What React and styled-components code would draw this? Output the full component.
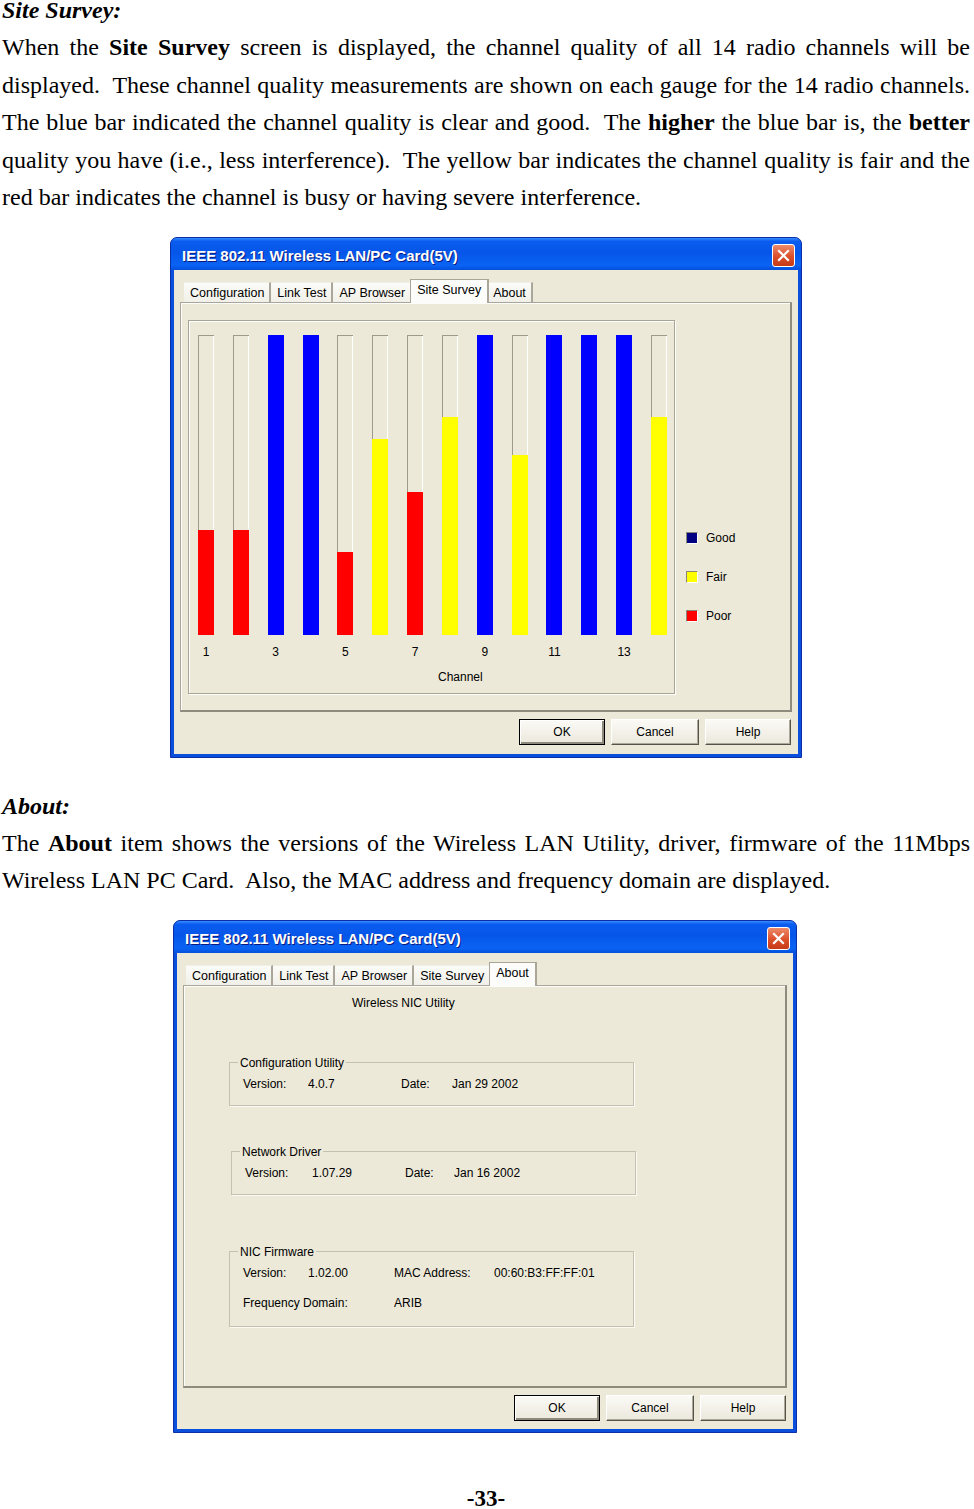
import React from "react";
import styled, { createGlobalStyle } from "styled-components";

const GlobalStyle = createGlobalStyle`
  html, body {
    margin: 0;
    padding: 0;
    background: #fff;
  }
  body {
    font-family: "Liberation Serif", "Times New Roman", serif;
    color: #000;
  }
`;

const BARS = [
  { q: "poor", h: 105 },
  { q: "poor", h: 105 },
  { q: "good", h: 300 },
  { q: "good", h: 300 },
  { q: "poor", h: 83 },
  { q: "fair", h: 196 },
  { q: "poor", h: 143 },
  { q: "fair", h: 218 },
  { q: "good", h: 300 },
  { q: "fair", h: 180 },
  { q: "good", h: 300 },
  { q: "good", h: 300 },
  { q: "good", h: 300 },
  { q: "fair", h: 218 },
];

const FILL = { good: "#0000ff", fair: "#ffff00", poor: "#ff0000" };
const SWATCH = { good: "#000080", fair: "#ffff00", poor: "#ff0000" };

const TABS = ["Configuration", "Link Test", "AP Browser", "Site Survey", "About"];

/* ---------- document ---------- */

const Page = styled.div`
  width: 974px;
  box-sizing: border-box;
  padding: 0 4px 0 2px;
`;

const Heading = styled.div`
  margin-top: ${(p) => p.$top || 0}px;
  font-size: 24px;
  font-style: italic;
  font-weight: bold;
  line-height: 20px;
  height: 20px;
`;

const Para = styled.div`
  margin-top: 9px;
  font-size: 24px;
  line-height: 37.5px;
`;

const Line = styled.div`
  text-align: ${(p) => (p.$last ? "left" : "justify")};
  text-align-last: ${(p) => (p.$last ? "left" : "justify")};
`;

const PageNo = styled.div`
  margin-top: 55px;
  text-align: center;
  font-size: 23px;
  font-weight: bold;
  line-height: 22px;
  height: 22px;
`;

/* ---------- xp window ---------- */

const Window = styled.div`
  width: ${(p) => p.$w}px;
  box-sizing: border-box;
  margin: 20px 0 0 ${(p) => p.$left}px;
  background: #0a4fdc;
  border: 1px solid #0b2fa6;
  border-radius: 7px 7px 0 0;
  padding: 0 3px 3px;
  font-family: "Liberation Sans", Arial, sans-serif;
  font-size: 12px;
`;

const TitleBar = styled.div`
  height: 32px;
  margin: 0 -3px;
  border-radius: 6px 6px 0 0;
  background: linear-gradient(
    180deg,
    #3a8cff 0%,
    #0a5cf0 10%,
    #0556e8 45%,
    #0a63f4 85%,
    #0450dc 100%
  );
  display: flex;
  align-items: center;
  justify-content: space-between;
  padding: 3px 6px 0 11px;
  box-sizing: border-box;
`;

const Title = styled.span`
  color: #fff;
  font-weight: bold;
  font-size: 15px;
  text-shadow: 1px 1px 0 #0a1a80;
  white-space: nowrap;
`;

const CloseBtn = styled.div`
  width: 21px;
  height: 21px;
  border: 1px solid #fff;
  border-radius: 3px;
  background: linear-gradient(180deg, #ec8b6c 0%, #dc4f2b 55%, #c73a17 100%);
  display: flex;
  align-items: center;
  justify-content: center;
`;

const Body = styled.div`
  background: #ece9d8;
  padding: 8px 6px ${(p) => p.$bottom}px;
`;

const TabRow = styled.div`
  display: flex;
  align-items: flex-end;
  height: 24px;
  padding-left: ${(p) => p.$indent}px;
  font-size: 12.5px;
`;

const Tab = styled.div`
  position: relative;
  box-sizing: border-box;
  height: ${(p) => (p.$active ? 24 : 21)}px;
  line-height: ${(p) => (p.$active ? 20 : 21)}px;
  padding: 0 ${(p) => (p.$active ? 6 : 5)}px;
  margin: 0 ${(p) => (p.$active ? -2 : 0)}px -1px;
  background: ${(p) =>
    p.$active ? "#fcfcfa" : "linear-gradient(180deg, #fbfbf8, #f0efe8)"};
  border: 1px solid ${(p) => (p.$active ? "#a9a699" : "transparent")};
  border-bottom: none;
  border-right: 2px solid #aaa79a;
  z-index: ${(p) => (p.$active ? 2 : 0)};
  white-space: nowrap;
`;

const Panel = styled.div`
  position: relative;
  z-index: 1;
  height: ${(p) => p.$h}px;
  box-sizing: border-box;
  border: 1px solid #a9a699;
  border-right: 2px solid #8e8b7e;
  border-bottom: 2px solid #8e8b7e;
  box-shadow: inset 1px 1px 0 #fdfdfb;
  background: #ece9d8;
`;

const Buttons = styled.div`
  margin-top: 7px;
  display: flex;
  justify-content: flex-end;
  gap: 6px;
  padding-right: 1px;
`;

const Button = styled.div`
  width: ${(p) => p.$w}px;
  height: ${(p) => p.$h}px;
  box-sizing: border-box;
  display: flex;
  align-items: center;
  justify-content: center;
  background: linear-gradient(180deg, #fbfaf6, #ebe8dc);
  border: 1px solid;
  border-color: ${(p) =>
    p.$default ? "#000 #000 #000 #000" : "#fff #55534a #55534a #fff"};
  box-shadow: ${(p) =>
    p.$default
      ? "inset 1px 1px 0 #fff, inset -2px -2px 0 #8d8a7c"
      : "inset -1px -1px 0 #aca899"};
`;

/* ---------- site survey chart ---------- */

const SurveyLayout = styled.div`
  display: flex;
  align-items: flex-start;
  padding: 17px 0 0 7px;
`;

const ChartBox = styled.div`
  width: 487px;
  height: 374px;
  box-sizing: border-box;
  border: 1px solid #a9a594;
  box-shadow: 1px 1px 0 #fff, inset 1px 1px 0 #fff;
  padding: 14px 0 0 9px;
`;

const BarRow = styled.div`
  display: flex;
  gap: 18.85px;
`;

const Track = styled.div`
  width: 16px;
  height: 300px;
  display: flex;
  flex-direction: column;
  justify-content: flex-end;
  background: #ece9d8;
  box-shadow: inset 1px 1px 0 #9d9a8a, inset -1px 0 0 #fff;
`;

const Fill = styled.div`
  width: 100%;
  background: ${(p) => FILL[p.$q]};
`;

const LabelCell = styled.div`
  width: 16px;
  text-align: center;
  white-space: nowrap;
  line-height: 16px;
`;

const LabelRow = styled(BarRow)`
  margin-top: 9px;
`;

const AxisName = styled.div`
  margin-top: 9px;
  padding-left: 240px;
  line-height: 16px;
`;

const Legend = styled.div`
  margin-left: 11px;
  padding-top: 212px;
  display: flex;
  flex-direction: column;
  gap: 27px;
`;

const LegendItem = styled.div`
  display: flex;
  align-items: center;
  gap: 8px;
  height: 12px;
`;

const Swatch = styled.span`
  width: 12px;
  height: 12px;
  box-sizing: border-box;
  background: ${(p) => SWATCH[p.$q]};
  border: 1px solid;
  border-color: #8a8778 #fff #fff #8a8778;
`;

/* ---------- about ---------- */

const Caption = styled.div`
  margin-top: 10px;
  padding-left: 168px;
  line-height: 14px;
`;

const Group = styled.fieldset`
  width: 405px;
  box-sizing: border-box;
  margin: ${(p) => p.$top}px 0 0 ${(p) => p.$left}px;
  padding: 7px 13px ${(p) => p.$pb}px;
  border: 1px solid #c4c1b1;
  box-shadow: 1px 1px 0 #fbfaf5;

  legend {
    padding: 0 2px;
    margin-left: -5px;
    line-height: 14px;
  }
`;

const Grid = styled.div`
  display: grid;
  grid-template-columns: ${(p) => p.$cols};
  row-gap: 16px;
  line-height: 14px;
  white-space: nowrap;
`;

const Span2 = styled.span`
  grid-column: span 2;
`;

const CloseIcon = () => (
  <svg width="13" height="13" viewBox="0 0 13 13">
    <path d="M2 2 L11 11 M11 2 L2 11" stroke="#fff" strokeWidth="2.2" strokeLinecap="square" />
  </svg>
);

const Dialog = ({ w, left, active, panelH, indent, bottom, btnH, children }) => (
  <Window $w={w} $left={left}>
    <TitleBar>
      <Title>IEEE 802.11 Wireless LAN/PC Card(5V)</Title>
      <CloseBtn>
        <CloseIcon />
      </CloseBtn>
    </TitleBar>
    <Body $bottom={bottom}>
      <TabRow $indent={indent}>
        {TABS.map((t) => (
          <Tab key={t} $active={t === active}>
            {t}
          </Tab>
        ))}
      </TabRow>
      <Panel $h={panelH}>{children}</Panel>
      <Buttons>
        <Button $w={86} $h={btnH} $default>
          OK
        </Button>
        <Button $w={88} $h={btnH}>
          Cancel
        </Button>
        <Button $w={86} $h={btnH}>
          Help
        </Button>
      </Buttons>
    </Body>
  </Window>
);

const SiteSurvey = () => (
  <SurveyLayout>
    <ChartBox>
      <BarRow>
        {BARS.map((b, i) => (
          <Track key={i}>
            <Fill $q={b.q} style={{ height: b.h }} />
          </Track>
        ))}
      </BarRow>
      <LabelRow>
        {BARS.map((b, i) => (
          <LabelCell key={i}>{i % 2 === 0 ? i + 1 : ""}</LabelCell>
        ))}
      </LabelRow>
      <AxisName>Channel</AxisName>
    </ChartBox>
    <Legend>
      <LegendItem>
        <Swatch $q="good" />
        Good
      </LegendItem>
      <LegendItem>
        <Swatch $q="fair" />
        Fair
      </LegendItem>
      <LegendItem>
        <Swatch $q="poor" />
        Poor
      </LegendItem>
    </Legend>
  </SurveyLayout>
);

const About = () => (
  <>
    <Caption>Wireless NIC Utility</Caption>
    <Group $top={46} $left={45} $pb={14}>
      <legend>Configuration Utility</legend>
      <Grid $cols="65px 93px 51px auto">
        <span>Version:</span>
        <span>4.0.7</span>
        <span>Date:</span>
        <span>Jan 29 2002</span>
      </Grid>
    </Group>
    <Group $top={39} $left={47} $pb={14}>
      <legend>Network Driver</legend>
      <Grid $cols="67px 93px 49px auto">
        <span>Version:</span>
        <span>1.07.29</span>
        <span>Date:</span>
        <span>Jan 16 2002</span>
      </Grid>
    </Group>
    <Group $top={50} $left={45} $pb={16}>
      <legend>NIC Firmware</legend>
      <Grid $cols="65px 86px 100px auto">
        <span>Version:</span>
        <span>1.02.00</span>
        <span>MAC Address:</span>
        <span>00:60:B3:FF:FF:01</span>
        <Span2>Frequency Domain:</Span2>
        <span>ARIB</span>
      </Grid>
    </Group>
  </>
);

const S = "\u00a0 ";

export default function App() {
  return (
    <>
      <GlobalStyle />
      <Page>
        <Heading>Site Survey:</Heading>
        <Para>
          <Line>
            When the <b>Site Survey</b> screen is displayed, the channel quality of all 14 radio channels will be
          </Line>
          <Line>
            {`displayed.${S}These channel quality measurements are shown on each gauge for the 14 radio channels.`}
          </Line>
          <Line>
            {`The blue bar indicated the channel quality is clear and good.${S}The `}
            <b>higher</b> the blue bar is, the <b>better</b>
          </Line>
          <Line>
            {`quality you have (i.e., less interference).${S}The yellow bar indicates the channel quality is fair and the`}
          </Line>
          <Line $last>red bar indicates the channel is busy or having severe interference.</Line>
        </Para>

        <Dialog w={632} left={168} active="Site Survey" panelH={410} indent={4} bottom={9} btnH={26}>
          <SiteSurvey />
        </Dialog>

        <Heading $top={38}>About:</Heading>
        <Para>
          <Line>
            The <b>About</b> item shows the versions of the Wireless LAN Utility, driver, firmware of the 11Mbps
          </Line>
          <Line $last>
            {`Wireless LAN PC Card.${S}Also, the MAC address and frequency domain are displayed.`}
          </Line>
        </Para>

        <Dialog w={624} left={171} active="About" panelH={403} indent={3} bottom={8} btnH={26}>
          <About />
        </Dialog>

        <PageNo>-33-</PageNo>
      </Page>
    </>
  );
}
